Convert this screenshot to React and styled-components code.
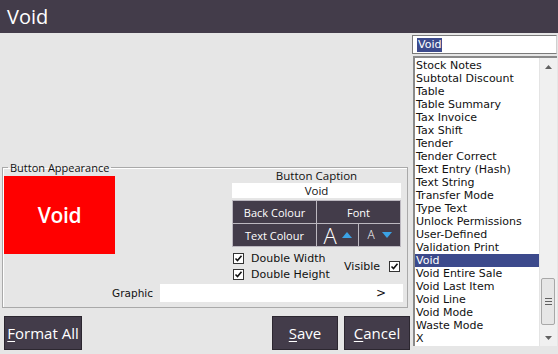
import React from "react";
import styled, { createGlobalStyle } from "styled-components";

const GlobalStyle = createGlobalStyle`
  html, body {
    margin: 0;
    padding: 0;
    background: #e6e6e6;
    overflow: hidden;
  }
  body {
    font-family: "DejaVu Sans", sans-serif;
  }
`;

const Window = styled.div`
  width: 558px;
  height: 354px;
  display: flex;
  flex-direction: column;
  background: #e6e6e6;
`;

const TitleBar = styled.div`
  height: 33px;
  flex: none;
  background: #433c4a;
  color: #fff;
  font-family: "Open Sans", sans-serif;
  font-size: 20px;
  line-height: 33px;
  padding-left: 7px;
`;

const Main = styled.div`
  flex: 1;
  display: flex;
  min-height: 0;
`;

const LeftCol = styled.div`
  width: 410px;
  display: flex;
  flex-direction: column;
  justify-content: flex-end;
  padding-bottom: 4px;
`;

const Group = styled.fieldset`
  margin: 0 0 0 2px;
  width: 406px;
  box-sizing: border-box;
  border: 1px solid #a9a9a9;
  box-shadow: inset 1px 1px 0 #fff;
  padding: 2px 6px 5px 1px;
  display: grid;
  grid-template-columns: 111px 1fr 169px;
  align-items: start;
`;

const Legend = styled.legend`
  font-family: "Open Sans", sans-serif;
  font-size: 11px;
  line-height: 13px;
  color: #111;
  margin-left: 4px;
  padding: 0 2px;
`;

const Swatch = styled.div`
  grid-column: 1;
  height: 78px;
  background: #ff0000;
  color: #fff;
  font-family: "Open Sans", sans-serif;
  font-weight: 600;
  font-size: 21px;
  display: flex;
  align-items: center;
  justify-content: center;
  letter-spacing: -0.3px;
`;

const CaptionCol = styled.div`
  grid-column: 3;
  margin-top: -7px;
  display: flex;
  flex-direction: column;
`;

const CaptionLabel = styled.div`
  font-family: "Open Sans", sans-serif;
  font-size: 11.5px;
  line-height: 13px;
  text-align: center;
  color: #111;
`;

const CaptionInput = styled.div`
  margin-top: 1px;
  height: 15px;
  background: #fff;
  font-family: "Open Sans", sans-serif;
  font-size: 11.5px;
  line-height: 15px;
  text-align: center;
  color: #111;
`;

const ColourGrid = styled.div`
  margin-top: 2px;
  display: grid;
  grid-template-columns: 83px 41px 41px;
  grid-auto-rows: 22px;
  gap: 1px;
  padding: 1px;
  background: #bcb8c0;
`;

const Cell = styled.div`
  grid-column: ${(p) => p.$span || "auto"};
  background: #433c4a;
  color: #fff;
  font-family: "Open Sans", sans-serif;
  font-size: 11px;
  display: flex;
  align-items: center;
  justify-content: center;
  gap: ${(p) => p.$gap || 0}px;
`;

const BigA = styled.span`
  font-family: "Open Sans", sans-serif;
  font-weight: 300;
  font-size: ${(p) => p.$size}px;
  line-height: 1;
`;

const Checks = styled.div`
  margin-top: 3px;
  display: flex;
  align-items: center;
  justify-content: space-between;
  padding: 0 1px;
`;

const CheckStack = styled.div`
  display: flex;
  flex-direction: column;
`;

const CheckRow = styled.label`
  height: 16px;
  display: flex;
  align-items: center;
  font-size: 11px;
  color: #111;
  flex-direction: ${(p) => (p.$reverse ? "row-reverse" : "row")};
  gap: ${(p) => (p.$reverse ? 9 : 7)}px;
`;

const Box = styled.span`
  width: 11px;
  height: 11px;
  box-sizing: border-box;
  border: 1px solid #333;
  background: #fff;
  display: flex;
  align-items: center;
  justify-content: center;
`;

const GraphicRow = styled.div`
  grid-column: 1 / 4;
  margin-top: 2px;
  margin-right: -2px;
  display: flex;
  justify-content: flex-end;
  align-items: center;
  gap: 7px;
`;

const GraphicLabel = styled.span`
  font-size: 10.5px;
  color: #111;
`;

const GraphicField = styled.div`
  width: 243px;
  height: 18px;
  background: #fff;
  display: flex;
  align-items: center;
  justify-content: flex-end;
  padding-right: 17px;
  box-sizing: border-box;
  font-size: 12px;
  color: #111;
`;

const ButtonRow = styled.div`
  margin-top: 8px;
  padding-left: 4px;
  display: flex;
  gap: 6px;
`;

const Button = styled.button`
  height: 34px;
  width: ${(p) => p.$w}px;
  margin-left: ${(p) => (p.$push ? "auto" : "0")};
  border: 1px solid #2c2730;
  background: #433c4a;
  color: #fff;
  font-family: "Open Sans", sans-serif;
  font-size: 15px;
  padding: 0;
  cursor: pointer;
  u {
    text-decoration-thickness: 1px;
    text-underline-offset: 2px;
  }
`;

const RightCol = styled.div`
  width: 145px;
  margin-left: 2px;
  padding-top: 2px;
  display: flex;
  flex-direction: column;
`;

const Combo = styled.div`
  height: 19px;
  box-sizing: border-box;
  border: 1px solid #7a7a7a;
  border-right-color: #d0d0d0;
  background: #fff;
  display: flex;
  align-items: center;
  padding-left: 4px;
`;

const Selected = styled.span`
  background: #3c4a8c;
  color: #fff;
  font-size: 11px;
  line-height: 14px;
  padding: 0 1px;
`;

const ListBox = styled.div`
  margin: 2px 0 0 1px;
  height: 290px;
  box-sizing: border-box;
  border-left: 2px solid #8a8a8a;
  border-top: 2px solid #8a8a8a;
  background: #fff;
  display: flex;
`;

const Items = styled.div`
  flex: 1;
  padding-top: 1px;
  overflow: hidden;
`;

const Item = styled.div`
  height: 13px;
  line-height: 13px;
  font-size: 11px;
  padding-left: 1px;
  white-space: nowrap;
  color: ${(p) => (p.$active ? "#fff" : "#111")};
  background: ${(p) => (p.$active ? "#3c4a8c" : "transparent")};
`;

const ScrollBar = styled.div`
  width: 17px;
  background: #f0f0f0;
  border-left: 1px solid #e4e4e4;
  display: flex;
  flex-direction: column;
`;

const Arrow = styled.div`
  height: 17px;
  display: flex;
  align-items: center;
  justify-content: center;
`;

const Track = styled.div`
  flex: 1;
  display: flex;
  flex-direction: column;
`;

const Thumb = styled.div`
  margin: 0 2px 0 1px;
  height: 47px;
  box-sizing: border-box;
  border: 1px solid #a8a8a8;
  border-radius: 2px;
  background: #e6e6e6;
  display: flex;
  align-items: center;
  justify-content: center;
`;

const items = [
  "Stock Notes",
  "Subtotal Discount",
  "Table",
  "Table Summary",
  "Tax Invoice",
  "Tax Shift",
  "Tender",
  "Tender Correct",
  "Text Entry (Hash)",
  "Text String",
  "Transfer Mode",
  "Type Text",
  "Unlock Permissions",
  "User-Defined",
  "Validation Print",
  "Void",
  "Void Entire Sale",
  "Void Last Item",
  "Void Line",
  "Void Mode",
  "Waste Mode",
  "X",
];

const Tick = () => (
  <svg width="9" height="9" viewBox="0 0 9 9">
    <polyline points="1.5,4.5 3.5,6.5 7.5,1.8" fill="none" stroke="#111" strokeWidth="1.6" />
  </svg>
);

const Check = ({ label, reverse }) => (
  <CheckRow $reverse={reverse}>
    <Box>
      <Tick />
    </Box>
    {label}
  </CheckRow>
);

const Tri = ({ up, color, w = 9, h = 5 }) => (
  <svg width={w} height={h} viewBox={`0 0 ${w} ${h}`}>
    <polygon points={up ? `0,${h} ${w / 2},0 ${w},${h}` : `0,0 ${w},0 ${w / 2},${h}`} fill={color} />
  </svg>
);

const Grip = () => (
  <svg width="7" height="7" viewBox="0 0 7 7">
    <path d="M0 0.5h7M0 3.5h7M0 6.5h7" stroke="#606060" strokeWidth="1" />
  </svg>
);

export default function App() {
  return (
    <Window>
      <GlobalStyle />
      <TitleBar>Void</TitleBar>
      <Main>
        <LeftCol>
          <Group>
            <Legend>Button Appearance</Legend>
            <Swatch>Void</Swatch>
            <CaptionCol>
              <CaptionLabel>Button Caption</CaptionLabel>
              <CaptionInput>Void</CaptionInput>
              <ColourGrid>
                <Cell>Back Colour</Cell>
                <Cell $span="2 / 4">Font</Cell>
                <Cell>Text Colour</Cell>
                <Cell $gap={5}>
                  <BigA $size={22}>A</BigA>
                  <Tri up color="#3ba3e6" w={10} h={6} />
                </Cell>
                <Cell $gap={7}>
                  <BigA $size={12}>A</BigA>
                  <Tri color="#3ba3e6" w={10} h={6} />
                </Cell>
              </ColourGrid>
              <Checks>
                <CheckStack>
                  <Check label="Double Width" />
                  <Check label="Double Height" />
                </CheckStack>
                <Check label="Visible" reverse />
              </Checks>
            </CaptionCol>
            <GraphicRow>
              <GraphicLabel>Graphic</GraphicLabel>
              <GraphicField>&gt;</GraphicField>
            </GraphicRow>
          </Group>
          <ButtonRow>
            <Button $w={78}>
              <u>F</u>ormat All
            </Button>
            <Button $w={66} $push>
              <u>S</u>ave
            </Button>
            <Button $w={66}>
              <u>C</u>ancel
            </Button>
          </ButtonRow>
        </LeftCol>
        <RightCol>
          <Combo>
            <Selected>Void</Selected>
          </Combo>
          <ListBox>
            <Items>
              {items.map((it) => (
                <Item key={it} $active={it === "Void"}>
                  {it}
                </Item>
              ))}
            </Items>
            <ScrollBar>
              <Arrow>
                <Tri up color="#606060" w={7} h={4} />
              </Arrow>
              <Track>
                <div style={{ height: 203 }} />
                <Thumb>
                  <Grip />
                </Thumb>
              </Track>
              <Arrow>
                <Tri color="#606060" w={7} h={4} />
              </Arrow>
            </ScrollBar>
          </ListBox>
        </RightCol>
      </Main>
    </Window>
  );
}
